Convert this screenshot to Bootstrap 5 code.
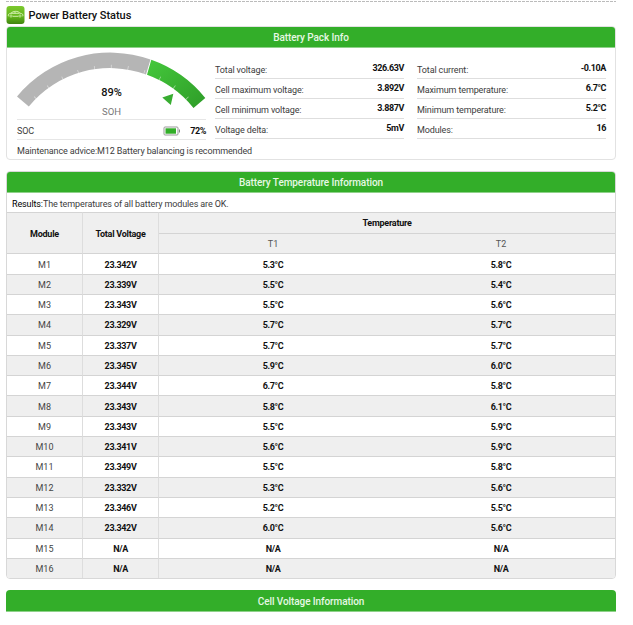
<!DOCTYPE html>
<html lang="en">
<head>
<meta charset="utf-8">
<meta name="viewport" content="width=device-width, initial-scale=1">
<title>Power Battery Status</title>
<link href="https://cdn.jsdelivr.net/npm/bootstrap@5.3.0/dist/css/bootstrap.min.css" rel="stylesheet">
<style>
body{font-family:Roboto,"Liberation Sans",sans-serif;font-size:9px;line-height:12px;letter-spacing:-.12px;color:#3c3c3c;background:#fff;overflow:hidden}
.page{width:610px;margin-left:6px;padding-top:1px}
.topline{height:1px;background:repeating-linear-gradient(90deg,#bbb 0 3px,#fff 3px 4px)}
.title-row{height:24px;padding-top:3px}
.title-row svg{margin-left:-.5px}
.title-row h1{font-size:11px;font-weight:500;color:#111;line-height:14px;letter-spacing:-.05px}
.panel{border:1px solid #e2e2e2;border-radius:4px;overflow:hidden}
.panel-title{height:21px;margin:-1px -1px 0;background:#33ae29;color:#e6f8e4;font-size:10px;font-weight:500;line-height:24px;letter-spacing:-.08px;text-align:center;box-sizing:content-box;border-bottom:1px solid #8fd18a}
.pack{height:134px;margin-bottom:11px}
.gauge{width:189px;margin-left:10px}
.gauge svg.arc{display:block;height:71px;letter-spacing:0}
.soc{height:21px;border-top:1px solid #e6e6e6;border-bottom:1px solid #e6e6e6;padding-top:2px}
.soc svg{margin-right:9px}
.val{font-weight:700;color:#111;letter-spacing:-.4px}
.info{width:189px;padding-top:11px}
.volts{margin-left:9px}
.info-row{height:20px;border-bottom:1px solid #dedede;padding-top:5px}
.info-row .val{margin-top:-2px;line-height:12px}
.advice{padding:5px 0 0 10px}
.info + .info{margin-right:9px}
.temps{height:408px;margin-bottom:11px;border-color:#d8d8d8}
.results{height:19px;padding:5px 0 0 5px}
.grid{table-layout:fixed;width:608px;border-collapse:separate;border-spacing:0}
.grid th,.grid td{padding:1px 0 0;text-align:center;vertical-align:middle;border-top:1px solid #d4d4d4;line-height:12px}
.grid td:not(:last-child),.grid th.side{border-right:1px solid #ddd}
.grid td:nth-child(3){border-right:0!important}
.grid thead tr{height:20.7px;background:#efefef}
.grid thead th{font-weight:700;color:#111;letter-spacing:-.25px}
.grid thead th.sub{font-weight:400;color:#555;letter-spacing:0}
.grid tbody tr{height:20.3px}
.grid tbody tr:nth-child(even){background:#efefef}
.grid tbody td{font-weight:700;color:#111;letter-spacing:-.35px}
.grid tbody td:first-child{font-weight:400;color:#444;letter-spacing:0}
.cells{border-radius:4px 4px 0 0;margin:0}
</style>
<script src="https://cdn.jsdelivr.net/npm/bootstrap@5.3.0/dist/js/bootstrap.bundle.min.js"></script>
</head>
<body>
<main class="page">
<div class="topline"></div>
<header class="title-row d-flex">
<svg width="19" height="19" viewBox="0 0 19 19"><defs><linearGradient id="ic" x2="0" y2="1"><stop stop-color="#7cc92e"/><stop offset=".6" stop-color="#62b41b"/><stop offset="1" stop-color="#3f8410"/></linearGradient></defs><rect x=".5" y="1" width="18" height="18" rx="3" fill="url(#ic)"/><path d="M2.500 11.300C1.600 9.400 3 8.600 5 8.200 7 5.900 12 5.600 14 8.200c2.500.3 3.500 1.300 2.700 3.100M6.700 11.300h5.700M5 8.300h8.500M9 6.600v1.700" fill="none" stroke="#ddf3bd" stroke-width=".9"/><circle cx="5" cy="11" r="1.100" fill="none" stroke="#ddf3bd" stroke-width=".7"/><circle cx="14" cy="11" r="1.100" fill="none" stroke="#ddf3bd" stroke-width=".7"/></svg>
<h1 class="mb-0 ms-1 pt-1">Power Battery Status</h1>
</header>
<section class="panel pack">
<div class="panel-title">Battery Pack Info</div>
<div class="d-flex">
<div class="gauge">
<svg class="arc" width="189" height="71" viewBox="17 48 189 71"><defs><linearGradient id="gg" x2="1" y2="1"><stop stop-color="#45c83c"/><stop offset="1" stop-color="#2e9c28"/></linearGradient></defs>
<path d="M17 96.500A121 121 0 0 1 150.500 59.500L146 74.500A105 105 0 0 0 28.800 106.500Z" fill="#b5b5b5"/>
<path d="M151.300 59.800A121 121 0 0 1 205.300 98L193.500 108A105 105 0 0 0 147 74.800Z" fill="url(#gg)"/>
<path d="M35.300 98.300A107 107 0 0 1 192 103.500" fill="none" stroke="#fff" stroke-opacity=".5" stroke-width="4" stroke-dasharray=".8 16"/>
<path d="M162.300 97.500L173.300 93.700 170.800 105Z" fill="#38ad31"/>
<text x="111.500" y="96" text-anchor="middle" font-size="11" font-weight="500" fill="#111">89%</text>
<text x="111.500" y="115" text-anchor="middle" font-size="9.500" fill="#777">SOH</text></svg>
<div class="soc d-flex align-items-center"><span>SOC</span>
<svg class="ms-auto" width="18" height="10" viewBox="0 0 18 10"><rect x="1" y="1" width="14" height="8" rx="1" fill="#fff" stroke="#999"/><rect x="2.500" y="2.300" width="10.500" height="5.400" fill="#33ae29"/><path d="M16.500 3.500v3" stroke="#888"/></svg>
<span class="val">72%</span></div>
</div>
<div class="info volts">
<div class="info-row d-flex justify-content-between"><span>Total voltage:</span><span class="val">326.63V</span></div>
<div class="info-row d-flex justify-content-between"><span>Cell maximum voltage:</span><span class="val">3.892V</span></div>
<div class="info-row d-flex justify-content-between"><span>Cell minimum voltage:</span><span class="val">3.887V</span></div>
<div class="info-row d-flex justify-content-between"><span>Voltage delta:</span><span class="val">5mV</span></div>
</div>
<div class="info ms-auto">
<div class="info-row d-flex justify-content-between"><span>Total current:</span><span class="val">-0.10A</span></div>
<div class="info-row d-flex justify-content-between"><span>Maximum temperature:</span><span class="val">6.7°C</span></div>
<div class="info-row d-flex justify-content-between"><span>Minimum temperature:</span><span class="val">5.2°C</span></div>
<div class="info-row d-flex justify-content-between"><span>Modules:</span><span class="val">16</span></div>
</div>
</div>
<div class="advice">Maintenance advice:M12 Battery balancing is recommended</div>
</section>
<section class="panel temps">
<div class="panel-title">Battery Temperature Information</div>
<div class="results"><span class="text-black">Results:</span>The temperatures of all battery modules are OK.</div>
<table class="grid">
<colgroup><col style="width:76px"><col style="width:76px"><col style="width:228px"><col style="width:228px"></colgroup>
<thead><tr><th class="side" rowspan="2">Module</th><th class="side" rowspan="2">Total Voltage</th><th colspan="2">Temperature</th></tr><tr><th class="sub">T1</th><th class="sub">T2</th></tr></thead>
<tbody>
<tr><td>M1</td><td>23.342V</td><td>5.3°C</td><td>5.8°C</td></tr>
<tr><td>M2</td><td>23.339V</td><td>5.5°C</td><td>5.4°C</td></tr>
<tr><td>M3</td><td>23.343V</td><td>5.5°C</td><td>5.6°C</td></tr>
<tr><td>M4</td><td>23.329V</td><td>5.7°C</td><td>5.7°C</td></tr>
<tr><td>M5</td><td>23.337V</td><td>5.7°C</td><td>5.7°C</td></tr>
<tr><td>M6</td><td>23.345V</td><td>5.9°C</td><td>6.0°C</td></tr>
<tr><td>M7</td><td>23.344V</td><td>6.7°C</td><td>5.8°C</td></tr>
<tr><td>M8</td><td>23.343V</td><td>5.8°C</td><td>6.1°C</td></tr>
<tr><td>M9</td><td>23.343V</td><td>5.5°C</td><td>5.9°C</td></tr>
<tr><td>M10</td><td>23.341V</td><td>5.6°C</td><td>5.9°C</td></tr>
<tr><td>M11</td><td>23.349V</td><td>5.5°C</td><td>5.8°C</td></tr>
<tr><td>M12</td><td>23.332V</td><td>5.3°C</td><td>5.6°C</td></tr>
<tr><td>M13</td><td>23.346V</td><td>5.2°C</td><td>5.5°C</td></tr>
<tr><td>M14</td><td>23.342V</td><td>6.0°C</td><td>5.6°C</td></tr>
<tr><td>M15</td><td>N/A</td><td>N/A</td><td>N/A</td></tr>
<tr><td>M16</td><td>N/A</td><td>N/A</td><td>N/A</td></tr>
</tbody></table>
</section>
<section><div class="panel-title cells">Cell Voltage Information</div></section>
</main>
</body>
</html>
